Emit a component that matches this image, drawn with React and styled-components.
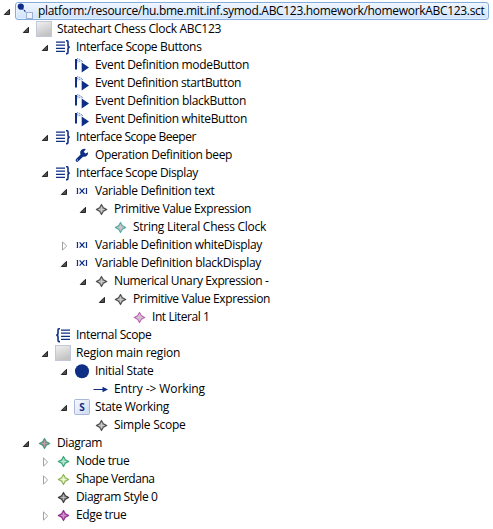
import React, { useLayoutEffect, useRef, useState } from "react";
import styled, { createGlobalStyle, css } from "styled-components";

const GlobalStyle = createGlobalStyle`
  html, body { margin: 0; padding: 0; background: #fff; overflow: hidden; }
`;

const Tree = styled.ul`
  list-style: none;
  margin: 0;
  padding: 2px 0 0;
  width: 493px;
  height: 529px;
  box-sizing: border-box;
  background: #fff;
  color: #000;
  font-family: "Open Sans", "Noto Sans", sans-serif;
  font-size: 12px;
`;

const Row = styled.li`
  display: flex;
  height: 18px;
  padding-left: ${(p) => 3 + p.$level * 19}px;
`;

const Twisty = styled.svg`
  flex: none;
  width: 12px;
  height: 18px;
`;

const Item = styled.div`
  display: flex;
  align-items: center;
  gap: 5px;
  height: 18px;
  box-sizing: border-box;
  padding: 0 3px 0 1px;
  border: 1px solid transparent;
  border-radius: 3px;
  ${(p) =>
    p.$selected &&
    css`
      border-color: #84acdd;
      background: linear-gradient(#eff6ff, #cfe3fd);
      box-shadow: inset 0 0 0 1px #f3f8ff88;
    `}
`;

const Icon = styled.svg`
  flex: none;
  width: 16px;
  height: 16px;
`;

const LabelBox = styled.span`
  width: ${(p) => p.$width}px;
  height: 16px;
  line-height: 16px;
  white-space: pre;
`;

/* Label whose tracking is adjusted so the text fills the given width. */
function Label({ text, width }) {
  const ref = useRef(null);
  const [tracking, setTracking] = useState(0);
  useLayoutEffect(() => {
    const natural = ref.current.getBoundingClientRect().width;
    setTracking((width - natural) / text.length);
  }, [text, width]);
  return (
    <LabelBox $width={width}>
      <span ref={ref} style={{ letterSpacing: `${tracking}px` }}>{text}</span>
    </LabelBox>
  );
}

const NAVY = "#0f2f87";

const star = (edge, fill, core) => (
  <>
    <path d="M8.5 3.4 L10.4 6.7 L13.7 8.5 L10.4 10.3 L8.5 13.6 L6.6 10.3 L3.3 8.5 L6.6 6.7Z" fill={fill} stroke={edge} strokeWidth="1.1" strokeLinejoin="round" />
    <path d="M8.5 6V11M6 8.5H11" stroke={core} strokeWidth="1" />
  </>
);

const icons = {
  resource: (
    <>
      <path d="M5 5L10 10.5" stroke={NAVY} strokeWidth="1.2" strokeDasharray="2 1" />
      <circle cx="3.8" cy="3.6" r="3.1" fill={NAVY} />
      <rect x="9.5" y="9.5" width="6" height="6" fill="#eef3fb" stroke="#9fb0d8" />
    </>
  ),
  region: (
    <>
      <defs>
        <linearGradient id="regionFill" x1="0" y1="0" x2="0.4" y2="1">
          <stop offset="0" stopColor="#f2f2f2" />
          <stop offset="1" stopColor="#c3c3c3" />
        </linearGradient>
      </defs>
      <rect x="0.5" y="0.5" width="15" height="15" fill="url(#regionFill)" stroke="#c3c8d8" />
    </>
  ),
  scope: (
    <g stroke={NAVY} fill="none">
      <path d="M1 3.2H10M1 6.2H10M1 9.3H10M1 12.4H10" strokeWidth="1.2" />
      <path d="M11 1.7H12.2Q13 1.7 13 3V6.6Q13 8.2 14.8 8.2Q13 8.2 13 9.8V13Q13 14.6 12.2 14.6H11" strokeWidth="1.6" />
    </g>
  ),
  internal: (
    <g stroke={NAVY} fill="none">
      <path d="M6 3.2H15M6 6.2H15M6 9.3H15M6 12.4H15" strokeWidth="1.2" />
      <path d="M5 1.7H3.8Q3 1.7 3 3V6.6Q3 8.2 1.2 8.2Q3 8.2 3 9.8V13Q3 14.6 3.8 14.6H5" strokeWidth="1.6" />
    </g>
  ),
  event: (
    <>
      <rect x="1" y="2" width="2" height="10.5" fill={NAVY} />
      <path d="M3 1.2L5.5 1.5L9 4.2L8 5.5L5.5 5.2L3 6Z" fill="#d3ddf0" />
      <path d="M3 1.5H4M5 2.5H6M7 3.5H8M5 4.5H6M3 3.5H4M8 4.5H9" stroke="#8ba3d2" />
      <path d="M7.7 5.6L15 10.6L7.7 15.4Z" fill={NAVY} />
    </>
  ),
  operation: (
    <>
      <path d="M3.2 13.2L9 7.5" stroke={NAVY} strokeWidth="3.2" strokeLinecap="round" />
      <path d="M11.8 2.1A4 4 0 1 0 14.1 5.2L11.6 6.6L9.7 5.1Z" fill={NAVY} />
      <circle cx="3.4" cy="13" r="0.6" fill="#fff" />
    </>
  ),
  variable: (
    <g stroke={NAVY} fill="none">
      <path d="M3.5 5.5H2.5M3.5 10.5H2.5M11.5 5.5H10.5M11.5 10.5H10.5" strokeWidth="1" opacity="0.45" />
      <path d="M3.5 5V11M12.5 5V11" strokeWidth="1.2" />
      <path d="M5.6 5.4L10.4 10.6M10.4 5.4L5.6 10.6" strokeWidth="1.3" />
    </g>
  ),
  initial: <circle cx="8" cy="8.2" r="7" fill={NAVY} />,
  transition: (
    <>
      <path d="M0.5 8.5H10" stroke={NAVY} />
      <path d="M9.5 5.7L15 8.5L9.5 11.3Z" fill={NAVY} />
    </>
  ),
  state: (
    <>
      <defs>
        <linearGradient id="stateFill" x1="0" y1="0" x2="1" y2="1">
          <stop offset="0" stopColor="#f8faff" />
          <stop offset="1" stopColor="#cfdaf0" />
        </linearGradient>
      </defs>
      <rect x="0.5" y="0.5" width="15" height="15" rx="1" fill="url(#stateFill)" stroke="#a9b7da" />
      <text x="8" y="11.8" textAnchor="middle" fontFamily="Open Sans, sans-serif" fontSize="10" fontWeight="700" fill={NAVY}>S</text>
    </>
  ),
  gray: star("#4c4c4c", "#a9a9a9", "#c9c9c9"),
  dark: star("#3d3d3d", "#858585", "#b5b5b5"),
  teal: star("#4fa9a5", "#a9c9c5", "#d5bfc2"),
  diagram: star("#4b9c80", "#909090", "#c09aa6"),
  green: star("#35a477", "#93d3b4", "#b9e3cd"),
  lime: star("#8bb350", "#d5e5b4", "#eef5dd"),
  pink: star("#b867b0", "#e0bfdc", "#c9c9b5"),
  purple: star("#8e2f8c", "#b869b3", "#cf94c9"),
};

const rows = [
  [0, "open", "resource", "platform:/resource/hu.bme.mit.inf.symod.ABC123.homework/homeworkABC123.sct", 446.5],
  [1, "open", "region", "Statechart Chess Clock ABC123", 164],
  [2, "open", "scope", "Interface Scope Buttons", 125.5],
  [3, null, "event", "Event Definition modeButton", 154],
  [3, null, "event", "Event Definition startButton", 146],
  [3, null, "event", "Event Definition blackButton", 151],
  [3, null, "event", "Event Definition whiteButton", 152],
  [2, "open", "scope", "Interface Scope Beeper", 120],
  [3, null, "operation", "Operation Definition beep", 137],
  [2, "open", "scope", "Interface Scope Display", 122],
  [3, "open", "variable", "Variable Definition text", 119.5],
  [4, "open", "gray", "Primitive Value Expression", 137],
  [5, null, "teal", "String Literal Chess Clock", 133],
  [3, "closed", "variable", "Variable Definition whiteDisplay", 167],
  [3, "open", "variable", "Variable Definition blackDisplay", 166],
  [4, "open", "gray", "Numerical Unary Expression -", 154.5],
  [5, "open", "gray", "Primitive Value Expression", 137],
  [6, null, "pink", "Int Literal 1", 57.5],
  [2, null, "internal", "Internal Scope", 75.5],
  [2, "open", "region", "Region main region", 104],
  [3, "open", "initial", "Initial State", 58.5],
  [4, null, "transition", "Entry -> Working", 91],
  [3, "open", "state", "State Working", 74],
  [4, null, "gray", "Simple Scope", 71.5],
  [1, "open", "diagram", "Diagram", 45],
  [2, "closed", "green", "Node true", 53.5],
  [2, "closed", "lime", "Shape Verdana", 78.5],
  [2, null, "dark", "Diagram Style 0", 81.5],
  [2, "closed", "purple", "Edge true", 50.5],
];

function Toggle({ state }) {
  return (
    <Twisty viewBox="0 0 12 18">
      {state === "open" && <path d="M6.5 7.3V12.5H1.3Z" fill="#505050" stroke="#262626" />}
      {state === "closed" && <path d="M2.5 5.9L6.7 10L2.5 14.1Z" fill="#fff" stroke="#a2a2a2" />}
    </Twisty>
  );
}

export default function App() {
  return (
    <>
      <GlobalStyle />
      <Tree>
        {rows.map(([level, state, icon, text, width], i) => (
          <Row key={i} $level={level}>
            <Toggle state={state} />
            <Item $selected={i === 0}>
              <Icon viewBox="0 0 16 16">{icons[icon]}</Icon>
              <Label text={text} width={width} />
            </Item>
          </Row>
        ))}
      </Tree>
    </>
  );
}
